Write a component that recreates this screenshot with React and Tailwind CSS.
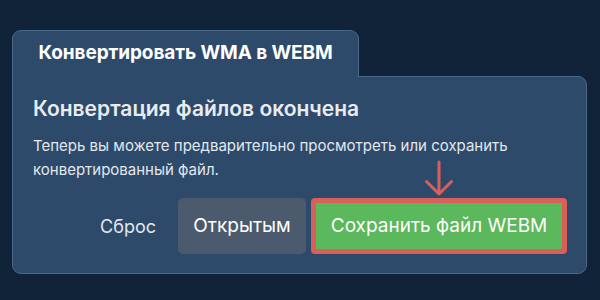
import React from 'react'

function DownArrow() {
  return (
    <svg width="30" height="36" viewBox="0 0 30 36" fill="none" className="absolute left-1/2 -top-[38px] -translate-x-1/2">
      <path d="M15 2v32M2.5 21.5 15 34l12.5-12.5" stroke="#d9605a" strokeWidth="3" strokeLinecap="round" strokeLinejoin="round" />
    </svg>
  )
}

export default function App() {
  return (
    <div className="h-[300px] w-[600px] bg-[#112339] pl-[12px] pr-[13px] pt-[30px]" style={{ fontFamily: 'Inter, "Noto Sans", sans-serif' }}>
      <div className="relative z-10 -mb-px flex h-[47px] w-[347px] items-center justify-center rounded-t-[9px] border border-b-0 border-[#4a6888] bg-[#2d4a6b] pb-[2px]">
        <h1 className="text-[19px] font-bold tracking-[-0.1px] text-white">Конвертировать WMA в WEBM</h1>
      </div>
      <div className="rounded-[9px] rounded-tl-none border border-[#4a6888] bg-[#2d4a6b] pb-[19px] pl-[20px] pr-[19px] pt-[18px]">
        <h2 className="text-[21px] font-semibold leading-[28px] text-[#e8ebf0]">Конвертация файлов окончена</h2>
        <p className="mt-[11px] text-[15px] leading-[24px] text-[#e3e7ec]">
          Теперь вы можете предварительно просмотреть или сохранить
          <br />
          конвертированный файл.
        </p>
        <div className="mt-[16px] flex items-center justify-end">
          <button className="mr-[22px] text-[18px] text-[#e3e7ec]">Сброс</button>
          <button className="h-[56px] w-[128px] rounded-[5px] bg-[#4b5b6d] text-[19px] text-white">Открытым</button>
          <div className="relative ml-[5px]">
            <DownArrow />
            <button className="h-[56px] w-[256px] rounded-[4px] border-[5px] border-[#d9605a] bg-[#5cb85c] text-[19px] text-white">Сохранить файл WEBM</button>
          </div>
        </div>
      </div>
    </div>
  )
}
